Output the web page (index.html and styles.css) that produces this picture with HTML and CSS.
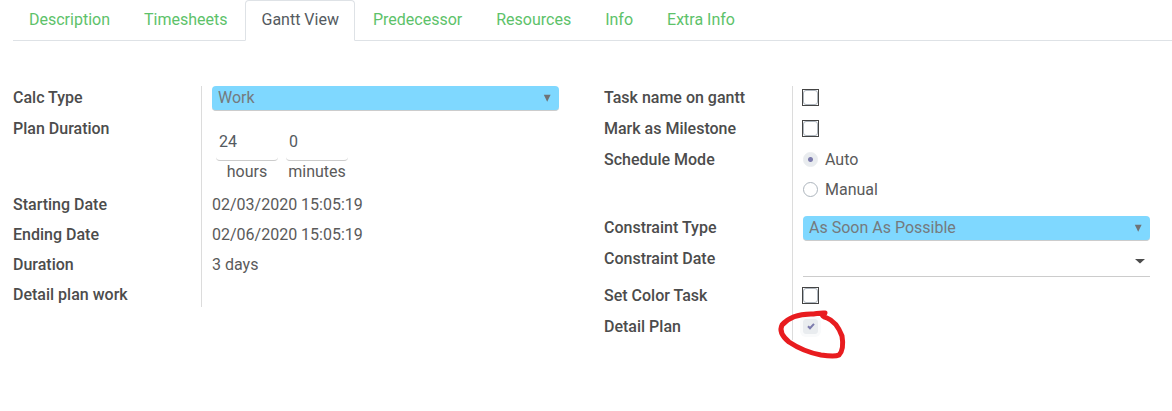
FILE: index.html
```html
<!DOCTYPE html>
<html lang="en">
<head>
<meta charset="utf-8">
<title>Task – Gantt View</title>
<link rel="stylesheet" href="styles.css">
</head>
<body>
<nav class="tabs">
  <a class="tab" href="#description">Description</a>
  <a class="tab" href="#timesheets">Timesheets</a>
  <a class="tab tab-active" href="#gantt" aria-current="page">Gantt View</a>
  <a class="tab" href="#predecessor">Predecessor</a>
  <a class="tab" href="#resources">Resources</a>
  <a class="tab" href="#info">Info</a>
  <a class="tab" href="#extra">Extra Info</a>
</nav>
<form class="groups">
  <section class="group">
    <div class="row">
      <label class="label" for="calc">Calc Type</label>
      <div class="value">
        <div class="select-wrap">
          <select class="select" id="calc"><option>Work</option></select>
          <svg class="arrow" viewBox="0 0 8 8" aria-hidden="true"><path d="M0.800 0.800h6.800L4.200 7.800z"/></svg>
        </div>
      </div>
    </div>
    <div class="row">
      <span class="label" id="plan">Plan Duration</span>
      <div class="value">
        <div class="duration" role="group" aria-labelledby="plan">
          <div class="part"><input class="number" id="hours" type="text" value="24"><label for="hours">hours</label></div>
          <div class="part"><input class="number" id="minutes" type="text" value="0"><label for="minutes">minutes</label></div>
        </div>
      </div>
    </div>
    <div class="row"><span class="label">Starting Date</span><div class="value">02/03/2020 15:05:19</div></div>
    <div class="row"><span class="label">Ending Date</span><div class="value">02/06/2020 15:05:19</div></div>
    <div class="row"><span class="label">Duration</span><div class="value">3 days</div></div>
    <div class="row"><span class="label">Detail plan work</span><div class="value"></div></div>
  </section>
  <section class="group">
    <div class="row">
      <label class="label" for="taskname">Task name on gantt</label>
      <div class="value"><div class="option"><input class="check" id="taskname" type="checkbox"></div></div>
    </div>
    <div class="row">
      <label class="label" for="milestone">Mark as Milestone</label>
      <div class="value"><div class="option"><input class="check" id="milestone" type="checkbox"></div></div>
    </div>
    <div class="row">
      <span class="label" id="mode">Schedule Mode</span>
      <div class="value">
        <div class="radios" role="radiogroup" aria-labelledby="mode">
          <label class="option"><input class="radio" type="radio" name="mode" checked>Auto</label>
          <label class="option"><input class="radio" type="radio" name="mode">Manual</label>
        </div>
      </div>
    </div>
    <div class="row">
      <label class="label" for="ctype">Constraint Type</label>
      <div class="value">
        <div class="select-wrap">
          <select class="select" id="ctype"><option>As Soon As Possible</option></select>
          <svg class="arrow" viewBox="0 0 8 8" aria-hidden="true"><path d="M0.800 0.800h6.800L4.200 7.800z"/></svg>
        </div>
      </div>
    </div>
    <div class="row">
      <label class="label" for="cdate">Constraint Date</label>
      <div class="value">
        <div class="date">
          <input class="date-input" id="cdate" type="text">
          <button class="date-toggle" type="button" aria-label="Open calendar"><svg class="caret" viewBox="0 0 10 5" aria-hidden="true"><path d="M0 0h10L5 4.500z"/></svg></button>
        </div>
      </div>
    </div>
    <div class="row">
      <label class="label" for="color">Set Color Task</label>
      <div class="value"><div class="option"><input class="check" id="color" type="checkbox"></div></div>
    </div>
    <div class="row">
      <label class="label" for="detail">Detail Plan</label>
      <div class="value">
        <div class="option marked">
          <input class="check-muted" id="detail" type="checkbox" checked>
          <svg class="tick" viewBox="0 0 8 8" aria-hidden="true"><path d="M1 4.200L3 6.200L7 1.800"/></svg>
          <svg class="ring" viewBox="0 0 70 52" aria-hidden="true"><path d="M47 5C41 4.500 38 6 33 6C21 6 10 10 4 17C1 23 5 29 11 34C20 40 32 45 43 47C50 48 57 49 61 47C65 43 65 34 64 28C61 20 57 13 49 10C46 9 44 8 44 6"/></svg>
        </div>
      </div>
    </div>
  </section>
</form>
</body>
</html>
```
FILE: styles.css
```css
* { box-sizing: border-box; }

body {
  margin: 0;
  background: #fff;
  color: #5a5a5a;
  font: 16px/24px Roboto, "Liberation Sans", sans-serif;
}

input, select, button {
  margin: 0;
  font: inherit;
  color: inherit;
}

.tabs {
  display: flex;
  gap: 2px;
  margin-left: 13px;
  border-bottom: 1px solid #dee2e6;
}

.tab {
  height: 41px;
  margin-bottom: -1px;
  padding: 8px 15px;
  border: 1px solid transparent;
  border-top: 0;
  color: #5dc26a;
  text-decoration: none;
}

.tab-active {
  padding-top: 7px;
  background: #fff;
  border: 1px solid #dee2e6;
  border-bottom-color: #fff;
  border-radius: 4px 4px 0 0;
  color: #545a60;
}

.groups {
  display: grid;
  grid-template-columns: 1fr 1fr;
  column-gap: 45px;
  align-items: start;
  padding: 45px 22px 45px 13px;
}

.row {
  display: grid;
  grid-template-columns: 188fr 358fr;
}

.label {
  color: #4c4c4c;
  font-weight: 500;
}

.value {
  min-height: 30px;
  padding: 0 0 6px 10px;
  border-left: 1px solid #dcdcdc;
}

.row:last-child .value {
  min-height: 24px;
  padding-bottom: 0;
}

.select-wrap { position: relative; }

.select {
  display: block;
  appearance: none;
  width: 100%;
  height: 25px;
  padding: 0 6px;
  border: 0;
  border-bottom: 1px solid #ccc;
  border-radius: 4px;
  background: #7fd8ff;
  color: #757a7d;
}

.arrow {
  position: absolute;
  top: 8px;
  right: 8px;
  width: 8px;
  height: 8px;
  fill: #6f7376;
  pointer-events: none;
}

.duration {
  display: flex;
  gap: 8px;
  padding: 4px;
}

.part {
  width: 62px;
  line-height: 22px;
  text-align: center;
}

.number {
  display: block;
  width: 100%;
  height: 40px;
  padding: 1px 3px 0;
  border: 0;
  border-bottom: 1px solid #ccc;
  border-radius: 4px;
  background: #fff;
  color: #545a60;
}

.option {
  display: flex;
  align-items: center;
  gap: 7px;
  height: 23px;
  margin-bottom: 2px;
}

.radios {
  display: grid;
  gap: 5px;
  padding-bottom: 7px;
}

.check, .check-muted, .radio {
  appearance: none;
  flex: none;
  width: 15px;
  height: 15px;
  border: 1px solid #adb5bd;
  border-radius: 3px;
  background: #fff;
}

.check {
  display: grid;
  width: 17px;
  height: 17px;
  margin-left: -1px;
  border-color: #444;
  border-radius: 0;
}

.check::before {
  content: "";
  border: 1px solid #adb5bd;
  border-radius: 3px;
}

.radio { border-radius: 50%; }

.radio:checked {
  border-color: #e9ecef;
  background: radial-gradient(circle, #7c7bad 2px, #e9ecef 3px);
}

.check-muted {
  border-color: #e9ecef;
  background: #e9ecef;
  box-shadow: 0 0 0 3px #f9fafb;
}

.date {
  display: flex;
  height: 30px;
  margin-bottom: 1px;
  border-bottom: 1px solid #ccc;
}

.date-input {
  flex: 1;
  min-width: 0;
  padding: 0;
  border: 0;
  background: none;
}

.date-toggle {
  display: flex;
  align-items: center;
  padding: 0 5px;
  border: 0;
  background: none;
}

.caret {
  width: 10px;
  height: 5px;
  fill: #4c4c4c;
}

.marked { position: relative; }

.tick {
  position: absolute;
  top: 7px;
  left: 4px;
  width: 8px;
  height: 8px;
  fill: none;
  stroke: #7c7bad;
  stroke-width: 2;
  pointer-events: none;
}

.ring {
  position: absolute;
  top: -7px;
  left: -25px;
  width: 70px;
  height: 52px;
  overflow: visible;
  fill: none;
  stroke: #e81c1f;
  stroke-width: 5;
  stroke-linecap: round;
  stroke-linejoin: round;
  pointer-events: none;
}
```
